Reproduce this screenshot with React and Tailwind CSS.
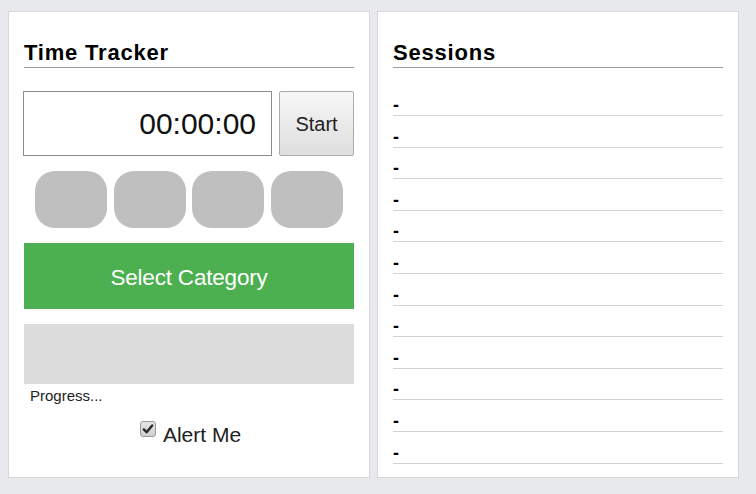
import React from "react";

const font = { fontFamily: '"Liberation Sans", Arial, sans-serif' };

function Title({ children }) {
  return (
    <h2 className="text-[22px] font-bold leading-[24px] pb-[2px] border-b border-[#9e9e9e] tracking-[0.8px] text-black">
      {children}
    </h2>
  );
}

export default function App() {
  const rows = Array.from({ length: 12 });
  return (
    <div
      className="w-[756px] h-[494px] bg-[#e8e9ec] pl-[8px] pt-[11px] flex gap-[7px]"
      style={font}
    >
      {/* Left panel */}
      <div className="w-[362px] h-[467px] bg-white border border-[#d6d6d6] px-[15px] pt-[29px] flex flex-col">
        <Title>Time Tracker</Title>
        <div className="mt-[23px] flex gap-[7px] h-[65px] -ml-px">
          <div className="w-[249px] h-full border border-[#8c8c8c] bg-white flex items-center justify-end pr-[15px] text-[30px] text-[#111] leading-none">
            00:00:00
          </div>
          <button className="w-[75px] h-full border border-[#ababab] rounded-[2px] bg-gradient-to-b from-[#f7f7f7] to-[#dedede] text-[20px] text-[#222] flex items-center justify-center">
            Start
          </button>
        </div>
        <div className="mt-[15px] flex justify-center gap-[6.67px]">
          <div className="w-[72px] h-[57px] rounded-[20px] bg-[#bfbfbf]" />
          <div className="w-[72px] h-[57px] rounded-[20px] bg-[#bfbfbf]" />
          <div className="w-[72px] h-[57px] rounded-[20px] bg-[#bfbfbf]" />
          <div className="w-[72px] h-[57px] rounded-[20px] bg-[#bfbfbf]" />
        </div>
        <div className="mt-[15px] h-[66px] bg-[#4caf50] text-white text-[22.5px] tracking-[-0.2px] flex items-center justify-center pt-[3px]">
          Select Category
        </div>
        <div className="mt-[15px] h-[60px] bg-[#dcdcdc]" />
        <div className="mt-[3px] pl-[6px] text-[15px] leading-[17px] text-[#222]">
          Progress...
        </div>
        <div className="mt-[19px] flex justify-center items-start gap-[7px] pl-[3px]">
          <div className="mt-[-2px] w-[16px] h-[16px] rounded-[3px] border border-[#9a9a9a] bg-gradient-to-b from-[#e6e6e6] to-[#cfcfcf] flex items-center justify-center">
            <svg width="12" height="12" viewBox="0 0 12 12">
              <path d="M1.8 6.4 L4.6 9.2 L10.2 2.4" fill="none" stroke="#2a2a2a" strokeWidth="2.4" strokeLinecap="round" strokeLinejoin="round" />
            </svg>
          </div>
          <span className="text-[21px] leading-[24px] text-[#222]">Alert Me</span>
        </div>
      </div>

      {/* Right panel */}
      <div className="w-[362px] h-[467px] bg-white border border-[#d6d6d6] px-[15px] pt-[29px] flex flex-col">
        <Title>Sessions</Title>
        <div className="mt-[16.4px] flex flex-col">
          {rows.map((_, i) => (
            <div
              key={i}
              className="pt-[10.6px] leading-[20px] text-[18px] font-bold text-black border-b border-[#d3d3d3]"
            >
              -
            </div>
          ))}
        </div>
      </div>
    </div>
  );
}
